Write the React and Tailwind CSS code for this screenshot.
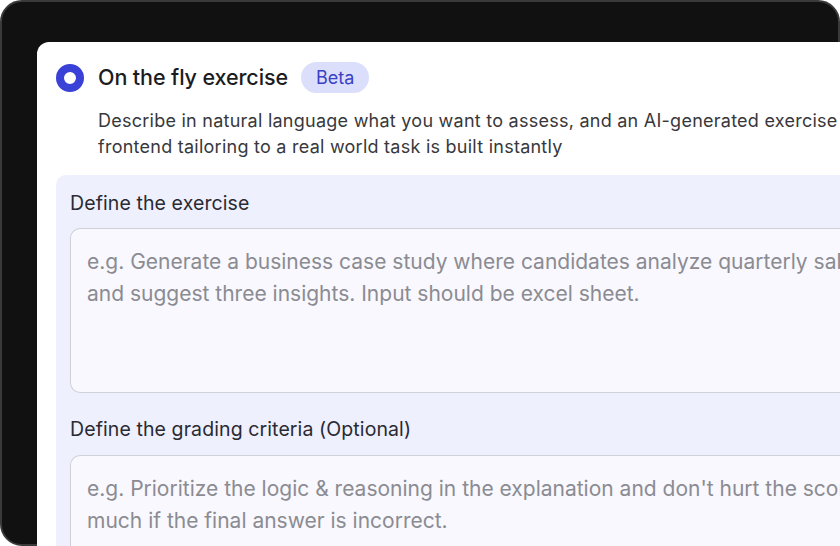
import React from "react";

export default function App() {
  return (
    <div className="w-[840px] h-[546px] bg-white overflow-hidden" style={{fontFamily: "Inter, 'Noto Sans', sans-serif"}}>
      <div className="h-[546px] rounded-[22px] border-2 border-[#3a3a3a] bg-[#111111] pt-[40px] pl-[35px]">
        <div className="w-[900px] h-[600px] rounded-tl-[12px] bg-white pt-[20px] pl-[19px]">
          <div className="flex items-center h-[31px]">
            <div className="w-[28px] h-[28px] rounded-full border-[8px] border-[#3a41d6] bg-white" />
            <span className="ml-[14px] text-[21.5px] font-medium text-[#1c1c1f] tracking-[-0.1px]">On the fly exercise</span>
            <span className="ml-[13px] h-[31px] px-[15px] flex items-center rounded-full bg-[#dcdffb] text-[18px] text-[#3a3fc4]">Beta</span>
          </div>
          <p className="mt-[15px] ml-[42px] text-[18px] leading-[26px] text-[#38383c] tracking-[0.25px] whitespace-nowrap">
            Describe in natural language what you want to assess, and an AI-generated exercise with
            <br />
            frontend tailoring to a real world task is built instantly
          </p>
          <div className="mt-[15px] rounded-tl-[10px] bg-[#eef0fd] pt-[15px] pl-[14px] pb-6">
            <div className="text-[19.5px] leading-[26px] text-[#2a2a33] tracking-[0.1px]">Define the exercise</div>
            <div className="mt-[12px] h-[165px] rounded-l-[10px] border-[1.5px] border-r-0 border-[#cfd0d8] bg-[#f8f8fe] pt-[17px] pl-[16px] text-[21px] leading-[32px] text-[#8b8b92] whitespace-nowrap">
              e.g. Generate a business case study where candidates analyze quarterly sales data
              <br />
              and suggest three insights. Input should be excel sheet.
            </div>
            <div className="mt-[23px] text-[19.5px] leading-[26px] text-[#2a2a33] tracking-[0.1px]">Define the grading criteria (Optional)</div>
            <div className="mt-[13px] h-[165px] rounded-l-[10px] border-[1.5px] border-r-0 border-[#cfd0d8] bg-[#f8f8fe] pt-[17px] pl-[16px] text-[21px] leading-[32px] text-[#8b8b92] whitespace-nowrap">
              e.g. Prioritize the logic &amp; reasoning in the explanation and don't hurt the score too
              <br />
              much if the final answer is incorrect.
            </div>
          </div>
        </div>
      </div>
    </div>
  );
}
